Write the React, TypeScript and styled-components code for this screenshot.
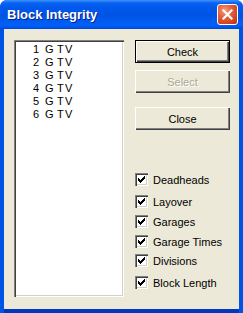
import styled, { createGlobalStyle } from "styled-components";

const GlobalStyle = createGlobalStyle`
  html, body {
    margin: 0;
    padding: 0;
    background: #ffffff;
  }
  body {
    font-family: "Liberation Sans", Arial, sans-serif;
    font-size: 11px;
  }
`;

const blocks = [1, 2, 3, 4, 5, 6];

const options = [
  { label: "Deadheads", top: 43 },
  { label: "Layover", top: 9 },
  { label: "Garages", top: 7 },
  { label: "Garage Times", top: 7 },
  { label: "Divisions", top: 6 },
  { label: "Block Length", top: 9 },
];

function CheckMark(): React.ReactElement {
  return (
    <svg width="7" height="7" viewBox="0 0 7 7" shapeRendering="crispEdges">
      <path
        d="M0 2h1v1h1v1h1v-1h1v-1h1v-1h1v-1h1v3h-1v1h-1v1h-1v1h-1v1h-1v-1h-1v-1h-1v-1h-1z"
        fill="#000000"
      />
    </svg>
  );
}

function CloseIcon(): React.ReactElement {
  return (
    <svg width="11" height="11" viewBox="0 0 11 11">
      <path d="M1.5 1.5L9.5 9.5M9.5 1.5L1.5 9.5" stroke="#ffffff" strokeWidth="2.2" strokeLinecap="square" />
    </svg>
  );
}

function App(): React.ReactElement {
  return (
    <>
      <GlobalStyle />
      <Window>
        <TitleBar>
          <Title>Block Integrity</Title>
          <CloseButton>
            <CloseIcon />
          </CloseButton>
        </TitleBar>
        <Body>
          <ListBox>
            {blocks.map((n) => (
              <ListRow key={n}>
                <Cell $width={12}>{n}</Cell>
                <Cell $width={12}>G</Cell>
                <Cell $width={8}>T</Cell>
                <Cell $width={8}>V</Cell>
              </ListRow>
            ))}
          </ListBox>
          <SideColumn>
            <Button $default $top={0}>Check</Button>
            <Button $disabled $top={7}>Select</Button>
            <Button $top={14}>Close</Button>
            {options.map((o) => (
              <OptionRow key={o.label} $top={o.top}>
                <CheckBox>
                  <CheckMark />
                </CheckBox>
                <OptionLabel>{o.label}</OptionLabel>
              </OptionRow>
            ))}
          </SideColumn>
        </Body>
      </Window>
    </>
  );
}

const Window = styled.div`
  width: 243px;
  height: 313px;
  display: flex;
  flex-direction: column;
  box-sizing: border-box;
  background: #0054e3;
  border-radius: 7px 7px 0 0;
  overflow: hidden;
`;

const TitleBar = styled.div`
  height: 29px;
  flex: none;
  display: flex;
  align-items: center;
  justify-content: space-between;
  padding: 0 5px 0 7px;
  box-sizing: border-box;
  background: linear-gradient(
    180deg,
    #3d95ff 0%,
    #0a63ef 10%,
    #0058ee 25%,
    #0054e3 55%,
    #0060f8 85%,
    #0057ef 93%,
    #0046d4 100%
  );
`;

const Title = styled.div`
  color: #ffffff;
  font-family: "Liberation Sans", Arial, sans-serif;
  font-weight: bold;
  font-size: 13px;
  text-shadow: 1px 1px #0a1e8a;
  margin-top: -1px;
`;

const CloseButton = styled.div`
  width: 21px;
  height: 21px;
  box-sizing: border-box;
  border: 1px solid #ffffff;
  border-radius: 3px;
  background: radial-gradient(circle at 35% 30%, #f5a080 0%, #e5653f 35%, #d2401c 75%, #b93210 100%);
  display: flex;
  align-items: center;
  justify-content: center;
  margin-top: -1px;
`;

const Body = styled.div`
  flex: 1;
  display: flex;
  align-items: flex-start;
  background: #ece9d8;
  margin: 0 4px 0 4px;
  padding: 11px 0 0 10px;
  box-sizing: border-box;
  border-bottom: 4px solid #0036c0;
  box-shadow: 0 1px 0 #0030a8;
`;

const ListBox = styled.div`
  width: 110px;
  height: 257px;
  box-sizing: border-box;
  background: #ffffff;
  padding: 3px 0 0 19px;
  box-shadow: inset 1px 1px #808080, inset 2px 2px #404040, inset -1px -1px #ffffff,
    inset -2px -2px #d4d0c8;
`;

const ListRow = styled.div`
  display: flex;
  height: 13px;
  line-height: 13px;
  color: #000000;
  font-size: 11px;
`;

const Cell = styled.span<{ $width: number }>`
  width: ${({ $width }) => $width}px;
`;

const SideColumn = styled.div`
  margin-left: 11px;
  width: 95px;
  display: flex;
  flex-direction: column;
`;

const Button = styled.div<{ $default?: boolean; $disabled?: boolean; $top: number }>`
  height: 23px;
  margin-top: ${({ $top }) => $top}px;
  box-sizing: border-box;
  display: flex;
  align-items: center;
  justify-content: center;
  background: #ece9d8;
  font-size: 11px;
  color: ${({ $disabled }) => ($disabled ? "#aca899" : "#000000")};
  text-shadow: ${({ $disabled }) => ($disabled ? "1px 1px #ffffff" : "none")};
  border: ${({ $default }) => ($default ? "1px solid #000000" : "none")};
  box-shadow: inset 1px 1px #ffffff, inset -1px -1px #404040, inset -2px -2px #808080;
`;

const OptionRow = styled.div<{ $top: number }>`
  display: flex;
  align-items: center;
  height: 13px;
  margin-top: ${({ $top }) => $top}px;
`;

const CheckBox = styled.div`
  width: 13px;
  height: 13px;
  flex: none;
  box-sizing: border-box;
  background: #ffffff;
  display: flex;
  align-items: center;
  justify-content: center;
  box-shadow: inset 1px 1px #808080, inset 2px 2px #404040, inset -1px -1px #ffffff,
    inset -2px -2px #d4d0c8;
`;

const OptionLabel = styled.span`
  margin-left: 5px;
  font-size: 11px;
  color: #000000;
  white-space: nowrap;
`;

export default App;
